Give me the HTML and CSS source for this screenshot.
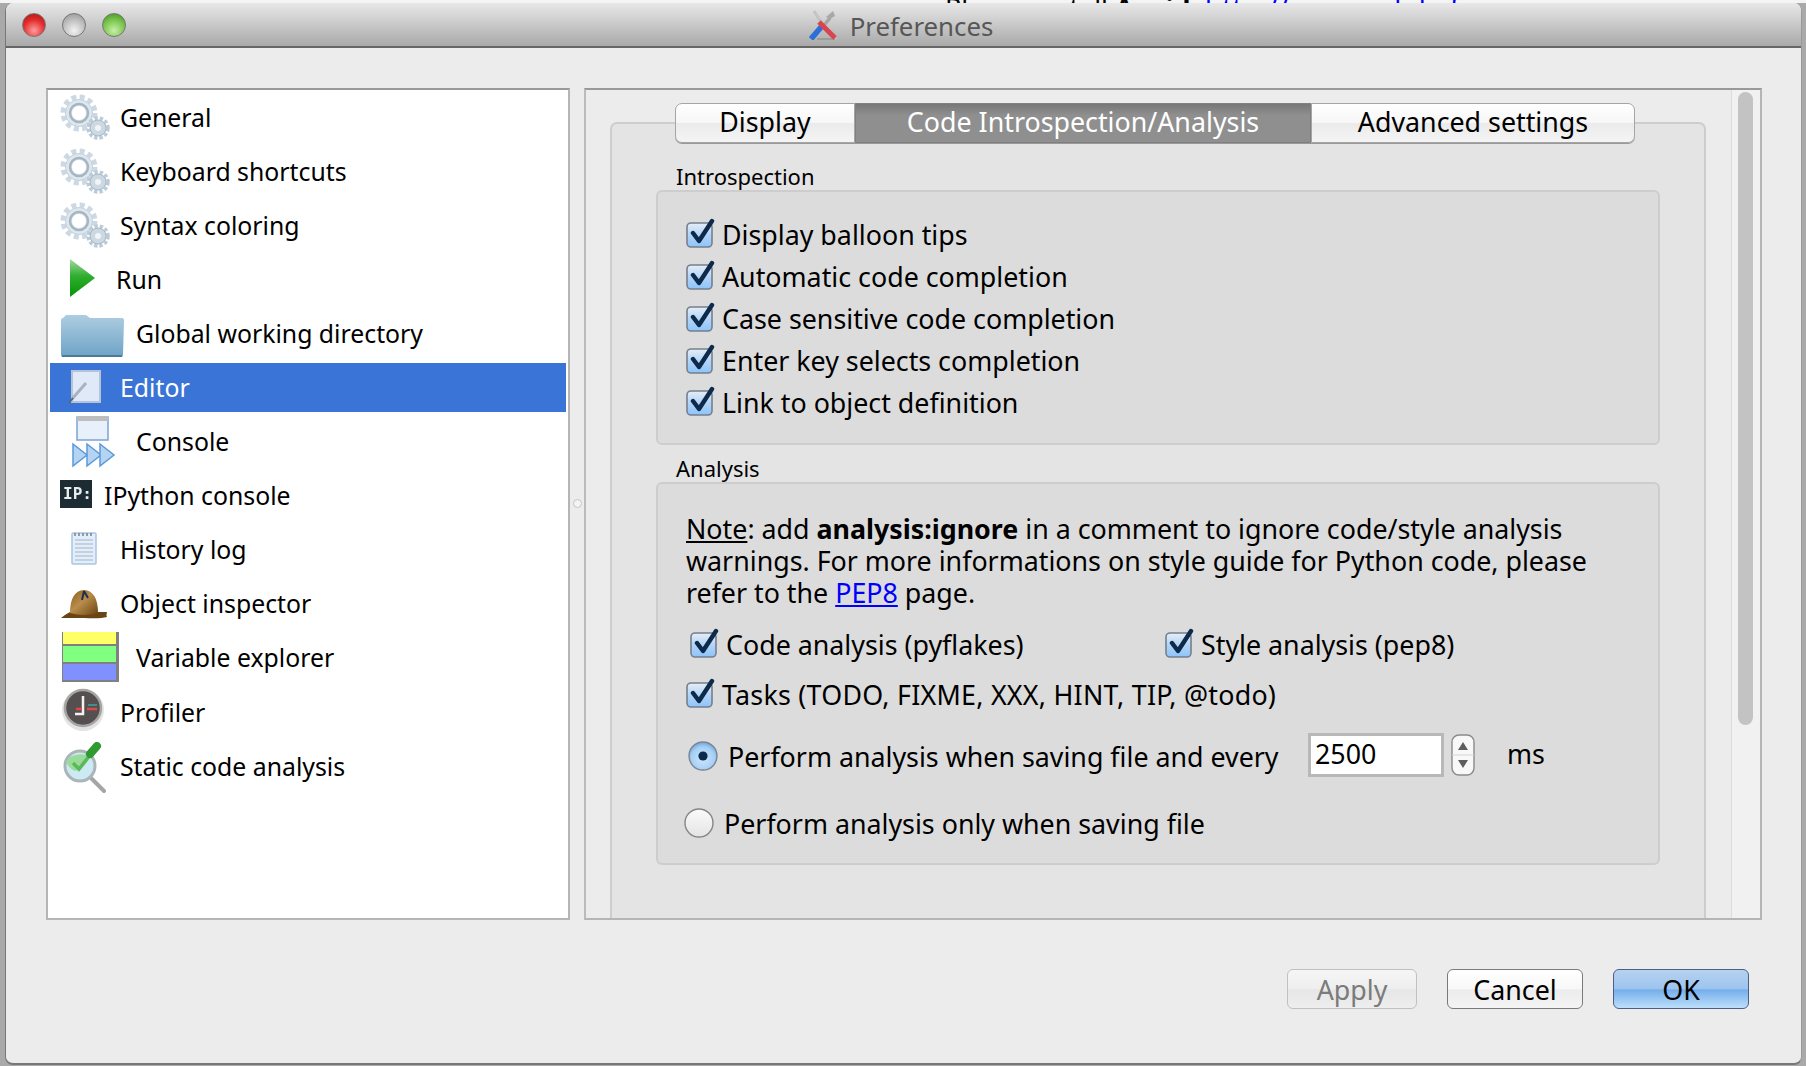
FILE: index.html
```html
<!DOCTYPE html>
<html lang="en">
<head>
<meta charset="utf-8">
<title>Preferences</title>
<link rel="stylesheet" href="styles.css">
</head>
<body>
<svg class="defs" width="0" height="0" aria-hidden="true">
  <defs>
    <linearGradient id="boxfill" x1="0" y1="0" x2="0" y2="1"><stop offset="0" stop-color="#e6eef8"/><stop offset=".5" stop-color="#b3d4f6"/><stop offset="1" stop-color="#8cc4fb"/></linearGradient>
    <radialGradient id="radiofill" cx=".5" cy=".6" r=".6"><stop offset="0" stop-color="#cfe6fb"/><stop offset=".7" stop-color="#a5cff5"/><stop offset="1" stop-color="#6ea6da"/></radialGradient>
    <linearGradient id="radiooff" x1="0" y1="0" x2="0" y2="1"><stop offset="0" stop-color="#fbfbfb"/><stop offset="1" stop-color="#e4e4e4"/></linearGradient>
    <linearGradient id="playfill" x1="0" y1="0" x2="0" y2="1"><stop offset="0" stop-color="#a5d8a5"/><stop offset=".45" stop-color="#2fae2f"/><stop offset="1" stop-color="#079407"/></linearGradient>
    <linearGradient id="folderfill" x1="0" y1="0" x2="0" y2="1"><stop offset="0" stop-color="#aecde0"/><stop offset="1" stop-color="#6da3c7"/></linearGradient>
    <linearGradient id="hatfill" x1="0" y1="0" x2="1" y2="1"><stop offset="0" stop-color="#8a5a1e"/><stop offset=".45" stop-color="#b98d4c"/><stop offset="1" stop-color="#6b4312"/></linearGradient>
    <symbol id="gear" viewBox="0 0 60 54">
      <circle cx="19" cy="23" r="16" fill="none" stroke="#ccd8e3" stroke-width="5" stroke-dasharray="5 3.4"/>
      <circle cx="19" cy="23" r="13.5" fill="#dfe7ee" stroke="#c2cfda" stroke-width="1"/>
      <circle cx="19" cy="23" r="9" fill="none" stroke="#a6b5c2" stroke-width="2.5"/>
      <circle cx="19" cy="23" r="7" fill="#fff"/>
      <circle cx="38" cy="38" r="10" fill="none" stroke="#bccbd8" stroke-width="3.5" stroke-dasharray="3.4 2"/>
      <circle cx="38" cy="38" r="8" fill="#ccd8e2" stroke="#a4b5c4" stroke-width="1"/>
      <circle cx="38" cy="38" r="3" fill="#f1f5f8"/>
    </symbol>
    <symbol id="check" viewBox="0 0 30 30">
      <rect x="1" y="5" width="25" height="24" rx="4" fill="url(#boxfill)" stroke="#767f8c" stroke-width="1.6"/>
      <path d="M7 15 L13 23 L26 3" fill="none" stroke="#0d2a4d" stroke-width="4.4" stroke-linecap="round" stroke-linejoin="round"/>
    </symbol>
  </defs>
</svg>
<div class="backdrop"><span class="backdrop-text">Please install <b>Avoid:</b> <span class="backdrop-link">http://www.iodide.fr</span></span></div>
<main class="window">
  <header class="titlebar">
    <div class="lights"><span class="light red"></span><span class="light grey"></span><span class="light green"></span></div>
    <div class="title">
      <svg class="title-icon" viewBox="0 0 30 30"><path d="M5 1 L10 9 L27 29" stroke="#c4c4c4" stroke-width="3" fill="none"/><path d="M24 1 L26 6 L21 9 L17 7 Z" fill="#a8a8a8"/><path d="M21 8 L11 20" stroke="#a5a5a5" stroke-width="3.5"/><path d="M8 29 L26 29" stroke="#9c9c9c" stroke-width="2"/><path d="M13 16 L2 29" stroke="#2b6fd8" stroke-width="5.5"/><path d="M10 12 L26 28" stroke="#d8454f" stroke-width="5"/></svg>
      <span class="title-text">Preferences</span>
    </div>
    <div></div>
  </header>
  <div class="content">
    <div class="main">
      <nav class="list">
        <div class="row"><svg class="ic w60" viewBox="0 0 60 54"><use href="#gear"/></svg><span>General</span></div>
        <div class="row"><svg class="ic w60" viewBox="0 0 60 54"><use href="#gear"/></svg><span>Keyboard shortcuts</span></div>
        <div class="row"><svg class="ic w60" viewBox="0 0 60 54"><use href="#gear"/></svg><span>Syntax coloring</span></div>
        <div class="row"><svg class="ic w56" viewBox="0 0 56 54"><path d="M10 7 L35 26 L10 45 Z" fill="url(#playfill)"/></svg><span>Run</span></div>
        <div class="row"><svg class="ic w76" viewBox="0 0 76 54"><path d="M1 14 Q1 12 3 12 L6 9 L26 9 L30 12 L62 12 Q64 12 64 14 L63 49 Q63 51 61 51 L3 51 Q1 51 1 49 Z" fill="url(#folderfill)"/><path d="M2 50 H62" stroke="#4e7a99" stroke-width="2"/></svg><span>Global working directory</span></div>
        <div class="row selected"><svg class="ic w60" viewBox="0 0 60 54"><rect x="12" y="11" width="28" height="31" fill="#dfe9f7" stroke="#b5c3d8" stroke-width="2"/><path d="M12 39 L26 23" stroke="#a7b2c4" stroke-width="3"/><path d="M9 43 L13 38" stroke="#5a677d" stroke-width="2"/></svg><span>Editor</span></div>
        <div class="row"><svg class="ic w76" viewBox="0 0 76 54"><rect x="17" y="3" width="31" height="23" fill="#e7f0fb" stroke="#7da3cf" stroke-width="1.5"/><rect x="17" y="2" width="31" height="5" fill="#bdbdbd"/><path d="M13 30 L27 41 L13 52 Z M27 30 L41 41 L27 52 Z" fill="#b5d4f4" stroke="#5b9ad9" stroke-width="1.5"/><path d="M40 30 L54 41 L40 52 Z" fill="#b5d4f4" stroke="#5b9ad9" stroke-width="1.5"/></svg><span>Console</span></div>
        <div class="row"><svg class="ic w44" viewBox="0 0 44 54"><rect x="0" y="12" width="32" height="28" fill="#1d2b33"/><text class="ip" x="3" y="31">IP:</text></svg><span>IPython console</span></div>
        <div class="row"><svg class="ic w60" viewBox="0 0 60 54"><rect x="12" y="11" width="24" height="31" rx="1" fill="#e3eefb" stroke="#a9c5e6" stroke-width="1.5"/><path d="M15 18 H33 M15 22 H33 M15 26 H33 M15 30 H33 M15 34 H33 M15 38 H33" stroke="#a3b3c6" stroke-width="1"/><path d="M15 11 V14 M19 11 V14 M23 11 V14 M27 11 V14 M31 11 V14" stroke="#777" stroke-width="1.4"/></svg><span>History log</span></div>
        <div class="row"><svg class="ic w60" viewBox="0 0 60 54"><path d="M1 42 Q6 38 10 36 L47 36 Q46 40 47 41 Q40 43 24 42 Q10 42 1 42 Z" fill="#6a4414"/><path d="M10 37 Q10 15 24 14 Q38 15 38 37 Q24 41 10 37 Z" fill="url(#hatfill)"/><path d="M24 15 L22 24 M24 15 L28 22" stroke="#1f2f4f" stroke-width="2"/></svg><span>Object inspector</span></div>
        <div class="row"><svg class="ic w76" viewBox="0 0 76 54"><rect x="2" y="2" width="57" height="50" fill="#808080"/><rect x="3" y="2" width="53" height="12" fill="#ffff66"/><rect x="3" y="16" width="53" height="16" fill="#80ff80"/><rect x="3" y="34" width="53" height="16" fill="#8090ff"/></svg><span>Variable explorer</span></div>
        <div class="row"><svg class="ic w60" viewBox="0 0 60 54"><circle cx="23" cy="25" r="21" fill="#e3e3e3"/><circle cx="23" cy="23" r="18" fill="#55504f" stroke="#a5a5a5" stroke-width="2.5"/><path d="M23 11 V29 H15" fill="none" stroke="#f2f2f2" stroke-width="2.5"/><path d="M16 24 H22 M27 24 H37" stroke="#e0474c" stroke-width="2.5"/><path d="M28 20 H37" stroke="#3aa6a6" stroke-width="1.5"/></svg><span>Profiler</span></div>
        <div class="row"><svg class="ic w60" viewBox="0 0 60 54"><path d="M30 38 L44 52" stroke="#a5a5a5" stroke-width="4" stroke-linecap="round"/><circle cx="20" cy="27" r="15" fill="#cdeaf4" stroke="#aab5ba" stroke-width="3"/><path d="M6 22 Q14 12 31 17 Q24 30 15 32 Q8 29 6 22 Z" fill="#9adb9a"/><path d="M13 24 L19 30 L30 16" fill="none" stroke="#5cb85c" stroke-width="3.5"/><path d="M30 15 L37 7" stroke="#2f9a2f" stroke-width="8" stroke-linecap="round"/></svg><span>Static code analysis</span></div>
      </nav>
      <div class="splitter"><span class="handle"></span></div>
      <section class="panel">
        <div class="area">
          <div class="tabs">
            <div class="tab tab-first">Display</div>
            <div class="tab tab-active">Code Introspection/Analysis</div>
            <div class="tab tab-last">Advanced settings</div>
          </div>
          <div class="pane">
            <div class="group-label">Introspection</div>
            <div class="group group-intro">
              <label class="check"><svg class="chk"><use href="#check"/></svg>Display balloon tips</label>
              <label class="check"><svg class="chk"><use href="#check"/></svg>Automatic code completion</label>
              <label class="check"><svg class="chk"><use href="#check"/></svg>Case sensitive code completion</label>
              <label class="check"><svg class="chk"><use href="#check"/></svg>Enter key selects completion</label>
              <label class="check"><svg class="chk"><use href="#check"/></svg>Link to object definition</label>
            </div>
            <div class="group-label group-label-second">Analysis</div>
            <div class="group group-analysis">
              <p class="note"><u>Note</u>: add <b>analysis:ignore</b> in a comment to ignore code/style analysis<br>warnings. For more informations on style guide for Python code, please<br>refer to the <a href="#">PEP8</a> page.</p>
              <div class="pair">
                <label class="check check-wide"><svg class="chk"><use href="#check"/></svg>Code analysis (pyflakes)</label>
                <label class="check"><svg class="chk"><use href="#check"/></svg>Style analysis (pep8)</label>
              </div>
              <label class="check tasks"><svg class="chk"><use href="#check"/></svg>Tasks (TODO, FIXME, XXX, HINT, TIP, @todo)</label>
              <div class="radio radio-on">
                <svg class="rad" viewBox="0 0 30 30"><circle cx="15" cy="15" r="14" fill="url(#radiofill)" stroke="#7c8694" stroke-width="1.4"/><circle cx="15" cy="15" r="4.6" fill="#0d2a4d"/></svg>
                <span class="radio-text">Perform analysis when saving file and every</span>
                <span class="spin-input">2500</span>
                <svg class="spinner" viewBox="0 0 24 42"><rect x="1" y="1" width="22" height="40" rx="7" fill="#f8f8f8" stroke="#8a8a8a" stroke-width="1.4"/><path d="M1 21 H23" stroke="#d5d5d5"/><path d="M12 8 L17 16 H7 Z M12 34 L17 26 H7 Z" fill="#5e5e5e"/></svg>
                <span class="unit">ms</span>
              </div>
              <div class="radio radio-off">
                <svg class="rad" viewBox="0 0 30 30"><circle cx="15" cy="15" r="14" fill="url(#radiooff)" stroke="#85858a" stroke-width="1.4"/></svg>
                <span>Perform analysis only when saving file</span>
              </div>
            </div>
          </div>
        </div>
        <div class="track"><div class="thumb"></div></div>
      </section>
    </div>
    <footer class="buttons">
      <button class="btn btn-disabled">Apply</button>
      <button class="btn">Cancel</button>
      <button class="btn btn-primary">OK</button>
    </footer>
  </div>
</main>
</body>
</html>
```
FILE: styles.css
```css
* { box-sizing: border-box; }
html, body { margin: 0; height: 100%; }
body {
  width: 1806px;
  height: 1066px;
  overflow: hidden;
  padding: 0 4px 1px 5px;
  display: flex;
  flex-direction: column;
  background: #a9a9a9;
  font-family: "Noto Sans", "DejaVu Sans", sans-serif;
  font-size: 26.8px;
  color: #000;
}
.defs { position: absolute; }
.backdrop {
  height: 3px;
  flex: none;
  overflow: hidden;
  margin: 0 -4px 0 -5px;
  background: #f4f4f4;
  padding-left: 945px;
  line-height: 30px;
  white-space: nowrap;
}
.backdrop-text { display: block; margin-top: -7px; }
.backdrop-link { color: #00f; letter-spacing: .6px; }

.window {
  flex: 1;
  display: flex;
  flex-direction: column;
  background: #ececec;
  border-radius: 8px;
  border-left: 1px solid #777;
  border-bottom: 2px solid #777;
  border-right: 1px solid #999;
  overflow: hidden;
}
.titlebar {
  height: 45px;
  flex: none;
  display: grid;
  grid-template-columns: 1fr auto 1fr;
  align-items: center;
  background: linear-gradient(#e8e8e8, #a9a9a9);
  border-bottom: 2px solid #666;
}
.lights { display: flex; gap: 16px; padding-left: 16px; }
.light { width: 24px; height: 24px; border-radius: 50%; border: 1px solid #777; }
.red { background: radial-gradient(circle at 50% 75%, #ff9d9d 0, #e22a2a 55%, #a31616 100%); }
.grey { background: radial-gradient(circle at 50% 75%, #f2f2f2 0, #b9b9b9 60%, #8f8f8f 100%); }
.green { background: radial-gradient(circle at 50% 75%, #c6f0a8 0, #79c44a 55%, #3e8a1e 100%); }
.title { display: flex; align-items: center; gap: 11px; color: #565656; font-size: 25.8px; margin-right: 5px; }
.title-icon { width: 30px; height: 30px; filter: blur(.4px); }
.title-text { margin-top: 2px; }

.content {
  flex: 1;
  display: flex;
  flex-direction: column;
  padding: 40px 39px 0 40px;
}
.main { height: 832px; display: flex; }

.list {
  width: 524px;
  flex: none;
  background: #fff;
  border: 2px solid #b5b5b5;
  border-top-color: #999;
  padding: 0 2px;
  font-size: 24.8px;
}
.row { height: 54.05px; display: flex; align-items: center; padding-left: 10px; white-space: nowrap; position: relative; }
.row.selected { color: #fff; }
.row.selected::before { content: ""; position: absolute; inset: 3px 0 2px; background: #3a74d6; }
.row > * { position: relative; }
.ic { flex: none; height: 54px; filter: blur(.6px); }
.w60 { width: 60px; }
.w56 { width: 56px; }
.w76 { width: 76px; }
.w44 { width: 44px; }
.ip { font-family: "DejaVu Sans Mono", monospace; font-size: 16px; font-weight: 700; fill: #e8edf0; }

.splitter { width: 14px; flex: none; display: flex; align-items: center; justify-content: center; padding-bottom: 2px; }
.handle { width: 9px; height: 9px; border-radius: 50%; border: 1px solid #c4c4c4; background: #f4f4f4; margin-top: 1px; }

.panel {
  flex: 1;
  display: flex;
  border: 2px solid #b5b5b5;
  border-top-color: #999;
  border-left-color: #bbb;
  overflow: hidden;
}
.area { flex: 1; display: flex; flex-direction: column; padding: 13px 25px 0 24px; min-width: 0; }
.tabs { display: flex; height: 40px; margin-left: 65px; flex: none; position: relative; z-index: 1; }
.tab {
  display: flex; align-items: center; justify-content: center;
  padding-bottom: 3px;
  background: linear-gradient(#fff 0, #f6f6f6 50%, #ebebeb 51%, #f4f4f4 100%);
  border: 1px solid #a5a5a5;
  box-shadow: 0 1px 0 #999;
}
.tab-first { width: 180px; border-radius: 7px 0 0 7px; }
.tab-active { width: 456px; background: linear-gradient(#777, #8f8f8f 30%, #8f8f8f); color: #fff; border-color: #808080; }
.tab-last { width: 324px; border-radius: 0 7px 7px 0; }
.pane {
  flex: 1;
  margin-top: -21px;
  background: #e4e4e4;
  border: 2px solid #cdcdcd;
  border-bottom: 0;
  border-radius: 7px 7px 0 0;
  padding: 39px 44px 0;
}
.group-label { height: 27px; line-height: 27px; margin-left: 20px; font-size: 22px; }
.group-label-second { margin-top: 10px; }
.group { background: #dcdcdc; border: 2px solid #cdcdcd; border-radius: 6px; padding-left: 28px; }
.group-intro { height: 255px; padding-top: 21px; }
.group-analysis { height: 383px; padding-top: 29px; }
.check { height: 42px; display: flex; align-items: center; gap: 6px; white-space: nowrap; }
.chk { width: 30px; height: 30px; flex: none; margin-top: -3px; }
.note { margin: 0 0 14px; line-height: 32px; white-space: nowrap; }
.note a { color: #00f; }
.pair { display: flex; padding-left: 4px; }
.check-wide { width: 475px; }
.tasks { margin-top: 8px; letter-spacing: .26px; }
.radio { height: 42px; display: flex; align-items: center; white-space: nowrap; }
.radio-on { margin-top: 20px; padding-left: 2px; }
.radio-off { margin-top: 25px; margin-left: -2px; }
.rad { width: 30px; height: 30px; flex: none; margin-right: 10px; }
.radio-text { width: 580px; flex: none; }
.spin-input {
  width: 136px; height: 44px; flex: none;
  display: flex; align-items: center;
  padding: 0 0 3px 4px;
  background: #fff;
  border: 3px solid #b8b8b8;
  margin-top: -2px;
}
.spinner { width: 24px; height: 42px; flex: none; margin-left: 7px; margin-top: -2px; }
.unit { margin-left: 32px; margin-top: -6px; }

.track { width: 29px; flex: none; background: #f1f1f1; border-left: 1px solid #dcdcdc; padding: 2px 7px 0 6px; }
.thumb { height: 633px; background: #c3c3c3; border-radius: 8px; }

.buttons { display: flex; justify-content: flex-end; gap: 30px; margin-top: 49px; padding-right: 13px; }
.btn {
  font: inherit;
  width: 136px; height: 40px; padding: 0;
  border: 1px solid #7a7a7a;
  border-radius: 6px;
  color: #000;
  background: linear-gradient(#fff 0, #f8f8f8 50%, #ececec 52%, #f4f4f4 100%);
}
.btn-disabled { width: 130px; color: #7b7b7b; border-color: #c0c0c0; background: linear-gradient(#f6f6f6, #eeeeee 50%, #e6e6e6 52%, #eee); }
.btn-primary { border-color: #4e5f87; background: linear-gradient(#b6d2f0 0, #9cc4ee 50%, #74adea 52%, #bde0fb 100%); }
```
